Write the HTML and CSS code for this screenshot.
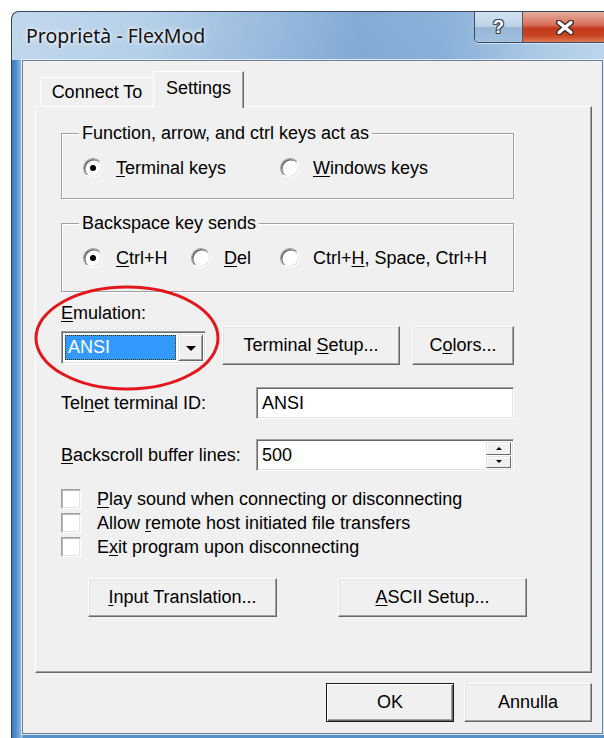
FILE: index.html
```html
<!DOCTYPE html>
<html lang="it">
<head>
<meta charset="utf-8">
<title>Proprietà - FlexMod</title>
<link rel="stylesheet" href="styles.css">
</head>
<body>
<div class="window">
  <div class="titlebar">
    <span class="title">Proprietà - FlexMod</span>
    <div class="caption">
      <span class="cap help">?</span>
      <span class="cap close">
        <svg width="18" height="15" viewBox="0 0 18 15">
          <path d="M3 2.5 L15 12.5 M15 2.5 L3 12.5" stroke="#3b2a28" stroke-width="6" stroke-linecap="round"/>
          <path d="M3 2.5 L15 12.5 M15 2.5 L3 12.5" stroke="#fff" stroke-width="3.4" stroke-linecap="round"/>
        </svg>
      </span>
    </div>
  </div>
  <div class="frame">
    <div class="client">
      <div class="tabs">
        <div class="tab">Connect To</div>
        <div class="tab active">Settings</div>
      </div>
      <div class="panel">
        <div class="group g-keys">
          <span class="legend">Function, arrow, and ctrl keys act as</span>
          <div class="options">
            <label class="opt w197"><span class="radio on"></span><span><u>T</u>erminal keys</span></label>
            <label class="opt"><span class="radio"></span><span><u>W</u>indows keys</span></label>
          </div>
        </div>
        <div class="group g-back">
          <span class="legend">Backspace key sends</span>
          <div class="options">
            <label class="opt w108"><span class="radio on"></span><span><u>C</u>trl+H</span></label>
            <label class="opt w89"><span class="radio"></span><span><u>D</u>el</span></label>
            <label class="opt"><span class="radio"></span><span>Ctrl+<u>H</u>, Space, Ctrl+H</span></label>
          </div>
        </div>

        <div class="field-label"><u>E</u>mulation:</div>
        <div class="emu-row">
          <div class="combo">
            <span class="combo-value">ANSI</span>
            <span class="drop"><span class="arrow-down"></span></span>
          </div>
          <button class="btn setup"><span>Terminal <u>S</u>etup...</span></button>
          <button class="btn colors"><span>C<u>o</u>lors...</span></button>
        </div>

        <div class="input-row first">
          <span class="row-label">Tel<u>n</u>et terminal ID:</span>
          <div class="textbox"><span class="value">ANSI</span></div>
        </div>
        <div class="input-row">
          <span class="row-label"><u>B</u>ackscroll buffer lines:</span>
          <div class="textbox spin">
            <span class="value">500</span>
            <span class="spin-btns">
              <span class="spin-btn"><span class="arrow-up"></span></span>
              <span class="spin-btn"><span class="arrow-down small"></span></span>
            </span>
          </div>
        </div>

        <div class="checks">
          <label class="check-row"><span class="checkbox"></span><span><u>P</u>lay sound when connecting or disconnecting</span></label>
          <label class="check-row"><span class="checkbox"></span><span>Allow <u>r</u>emote host initiated file transfers</span></label>
          <label class="check-row"><span class="checkbox"></span><span>E<u>x</u>it program upon disconnecting</span></label>
        </div>

        <div class="panel-buttons">
          <button class="btn wide translate"><span><u>I</u>nput Translation...</span></button>
          <button class="btn wide ascii"><span><u>A</u>SCII Setup...</span></button>
        </div>
      </div>

      <div class="dialog-buttons">
        <button class="btn dlg default"><span>OK</span></button>
        <button class="btn dlg"><span>Annulla</span></button>
      </div>
    </div>
  </div>
</div>

<svg class="annotation" width="190" height="108" viewBox="0 0 190 108">
  <ellipse cx="95" cy="54" rx="91" ry="51" fill="none" stroke="#e3161e" stroke-width="3"/>
</svg>
</body>
</html>
```

FILE: styles.css
```css
* { box-sizing: border-box; }

html, body { margin: 0; padding: 0; }

body {
  position: relative;
  width: 604px;
  height: 738px;
  overflow: hidden;
  background: #fff;
  font-family: "Liberation Sans", Arial, sans-serif;
  font-size: 18px;
  color: #000;
}

u {
  text-decoration-thickness: 1px;
  text-underline-offset: 2px;
}

button {
  font: inherit;
  color: inherit;
  padding: 0;
  margin: 0;
}

/* ---------- window chrome ---------- */
.window {
  margin: 11px 0 0 11px;
  width: 603px;
  height: 742px;
  border: 1px solid #34495f;
  border-bottom: none;
  border-radius: 8px 8px 0 0;
  overflow: hidden;
  display: flex;
  flex-direction: column;
  background:
    linear-gradient(180deg, rgba(255,255,255,0.2), rgba(255,255,255,0) 45%),
    linear-gradient(90deg, #b2cde7 0%, #a5c5e4 22%, #83acd7 42%, #6697cb 58%, #6f9fd0 72%, #9bbfe2 88%, #b2cde8 100%);
}

.titlebar {
  flex: none;
  height: 48px;
  display: flex;
  align-items: center;
  padding-left: 14px;
}

.title {
  font-family: "Noto Sans", "Open Sans", sans-serif;
  font-size: 19.5px;
  color: #111;
  margin-top: -1px;
  text-shadow: 0 0 6px rgba(255,255,255,0.9), 0 0 3px rgba(255,255,255,0.8);
}

.caption {
  margin-left: auto;
  margin-right: 5px;
  align-self: flex-start;
  display: flex;
  height: 31px;
  border: 1px solid #3b4d63;
  border-top: none;
  border-radius: 0 0 5px 5px;
  overflow: hidden;
  box-shadow: 0 1px 0 rgba(255,255,255,0.5);
}

.cap {
  height: 100%;
  display: flex;
  align-items: center;
  justify-content: center;
}

.help {
  width: 48px;
  border-right: 1px solid #4a5a6e;
  background: linear-gradient(180deg, #d3e2f1 0%, #bcd2e8 48%, #95b5d6 52%, #a3c2e0 100%);
  font-family: "Liberation Sans", Arial, sans-serif;
  font-weight: bold;
  font-size: 18px;
  color: #fff;
  text-shadow: 1px 0 0 #3f4856, -1px 0 0 #3f4856, 0 1px 0 #3f4856, 0 -1px 0 #3f4856,
               1px 1px 0 #3f4856, -1px -1px 0 #3f4856, 1px -1px 0 #3f4856, -1px 1px 0 #3f4856;
}

.close {
  width: 84px;
  background: linear-gradient(180deg, #e7ab9c 0%, #d8725c 42%, #c23a1c 54%, #c8431f 78%, #de7a58 100%);
}

.frame {
  flex: none;
  padding: 0 10px 5px 10px;
  background:
    linear-gradient(90deg, #3b77b7 0px, #5590cb 4px, #7eaedf 8px, #a3c7ea 10px, rgba(163,199,234,0) 11px),
    linear-gradient(180deg, #7eaad6 0%, #5590c9 100%);
}

.client {
  height: 674px;
  border: 1px solid #6b7f97;
  box-shadow: 0 0 0 1px rgba(235,244,252,0.85);
  background: #f0f0f0;
  padding: 10px 10px 0 12px;
  display: flex;
  flex-direction: column;
}

/* ---------- tab control ---------- */
.tabs {
  position: relative;
  z-index: 1;
  height: 35px;
  display: flex;
  align-items: flex-end;
  padding-left: 5px;
}

.tab {
  height: 29px;
  width: 113px;
  display: flex;
  align-items: center;
  justify-content: center;
  padding-top: 1px;
  border-top: 1px solid #fff;
  border-left: 1px solid #fff;
  border-radius: 2px 0 0 0;
  background: #f0f0f0;
}

.tab.active {
  width: 91px;
  height: 37px;
  margin-bottom: -2px;
  padding: 0 0 3px 0;
  border-right: 1px solid #696969;
  box-shadow: inset -1px 0 0 #a0a0a0;
}

.panel {
  height: 567px;
  border: 1px solid;
  border-color: #fff #696969 #696969 #fff;
  box-shadow: inset -1px -1px 0 #a0a0a0;
  padding-left: 25px;
  display: flex;
  flex-direction: column;
  align-items: flex-start;
}

/* ---------- group boxes ---------- */
.group {
  width: 453px;
  border: 1px solid #a0a0a0;
  box-shadow: inset 1px 1px 0 #fff, 1px 1px 0 #fff;
  display: flex;
  flex-direction: column;
  align-items: flex-start;
}

.g-keys { margin-top: 26px; height: 66px; }
.g-back { margin-top: 24px; height: 69px; }

.legend {
  margin: -12px 0 0 17px;
  padding: 0 3px;
  line-height: 22px;
  background: #f0f0f0;
}

.options {
  display: flex;
  margin-top: 13px;
  padding-left: 21px;
}

.opt {
  display: flex;
  align-items: center;
  gap: 13px;
  height: 22px;
}

.w197 { width: 197px; }
.w108 { width: 108px; }
.w89 { width: 89px; }

.radio {
  position: relative;
  width: 20px;
  height: 20px;
  border-radius: 50%;
  border: 1px solid;
  border-color: #a0a0a0 #fff #fff #a0a0a0;
  box-shadow: inset 1px 1px 0 0.5px #696969, inset -1px -1px 0 #e3e3e3;
  background: #fff;
  flex: none;
}

.radio.on::after {
  content: "";
  position: absolute;
  left: 6px;
  top: 6px;
  width: 6px;
  height: 6px;
  border-radius: 50%;
  background: #000;
}

/* ---------- emulation row ---------- */
.field-label {
  margin-top: 10px;
  line-height: 22px;
}

.emu-row {
  margin-top: 2px;
  display: flex;
  align-items: flex-start;
}

.combo {
  margin-top: 5px;
  width: 145px;
  height: 33px;
  display: flex;
  padding: 2px;
  border: 1px solid;
  border-color: #a0a0a0 #fff #fff #a0a0a0;
  box-shadow: inset 1px 1px 0 #696969, inset -1px -1px 0 #e3e3e3;
  background: #fff;
}

.combo-value {
  flex: 1;
  margin: 1px 2px 1px 1px;
  padding-left: 2px;
  background: #3399ff;
  color: #fff;
  border: 1px dotted #3a3300;
  line-height: 23px;
}

.drop {
  width: 25px;
  display: flex;
  align-items: center;
  justify-content: center;
  background: #f0f0f0;
  border: 1px solid;
  border-color: #e3e3e3 #696969 #696969 #e3e3e3;
  box-shadow: inset 1px 1px 0 #fff, inset -1px -1px 0 #a0a0a0;
}

.arrow-down {
  width: 0;
  height: 0;
  border-left: 5px solid transparent;
  border-right: 5px solid transparent;
  border-top: 5px solid #000;
  margin-top: 1px;
}

.arrow-down.small {
  border-left-width: 3px;
  border-right-width: 3px;
  border-top-width: 3px;
  margin-top: 0;
}

.arrow-up {
  width: 0;
  height: 0;
  border-left: 3px solid transparent;
  border-right: 3px solid transparent;
  border-bottom: 3px solid #000;
}

.btn {
  height: 39px;
  display: flex;
  align-items: center;
  justify-content: center;
  background: #f0f0f0;
  border: 1px solid;
  border-color: #fff #696969 #696969 #fff;
  box-shadow: inset -1px -1px 0 #a0a0a0, inset 1px 1px 0 #e3e3e3;
  cursor: default;
}

.setup { width: 178px; margin-left: 16px; }
.colors { width: 102px; margin-left: 12px; }

/* ---------- labelled inputs ---------- */
.input-row {
  margin-top: 20px;
  display: flex;
  align-items: center;
}

.input-row.first { margin-top: 22px; }

.row-label { width: 195px; }

.textbox {
  width: 258px;
  height: 32px;
  display: flex;
  align-items: center;
  padding-left: 5px;
  border: 1px solid;
  border-color: #a0a0a0 #fff #fff #a0a0a0;
  box-shadow: inset 1px 1px 0 #696969, inset -1px -1px 0 #e3e3e3;
  background: #fff;
}

.textbox .value { flex: 1; }

.spin-btns {
  display: flex;
  flex-direction: column;
  align-self: stretch;
  width: 27px;
  padding: 2px 2px 2px 0;
  gap: 1px;
}

.spin-btn {
  flex: 1;
  display: flex;
  align-items: center;
  justify-content: center;
  background: #f0f0f0;
  border: 1px solid;
  border-color: #e3e3e3 #696969 #696969 #e3e3e3;
  box-shadow: inset 1px 1px 0 #fff;
}

/* ---------- check boxes ---------- */
.checks {
  margin-top: 16px;
  display: flex;
  flex-direction: column;
}

.check-row {
  height: 24px;
  display: flex;
  align-items: center;
  gap: 16px;
}

.checkbox {
  width: 20px;
  height: 20px;
  flex: none;
  border: 1px solid;
  border-color: #a0a0a0 #fff #fff #a0a0a0;
  box-shadow: inset 1px 1px 0 #b9b9b9, inset -1px -1px 0 #e3e3e3;
  background: #fff;
}

.panel-buttons {
  margin-top: 19px;
  display: flex;
}

.wide { width: 189px; }
.translate { margin-left: 27px; }
.ascii { margin-left: 61px; }

/* ---------- OK / Annulla ---------- */
.dialog-buttons {
  margin-top: 10px;
  display: flex;
  justify-content: flex-end;
  gap: 10px;
}

.dlg { width: 128px; }

.btn.default {
  border-color: #1a1a1a;
  box-shadow: inset 1px 1px 0 #fff, inset -1px -1px 0 #696969, inset -2px -2px 0 #a0a0a0;
}

/* red marker drawn over the emulation controls */
.annotation {
  position: absolute;
  left: 32px;
  top: 284px;
}
```
